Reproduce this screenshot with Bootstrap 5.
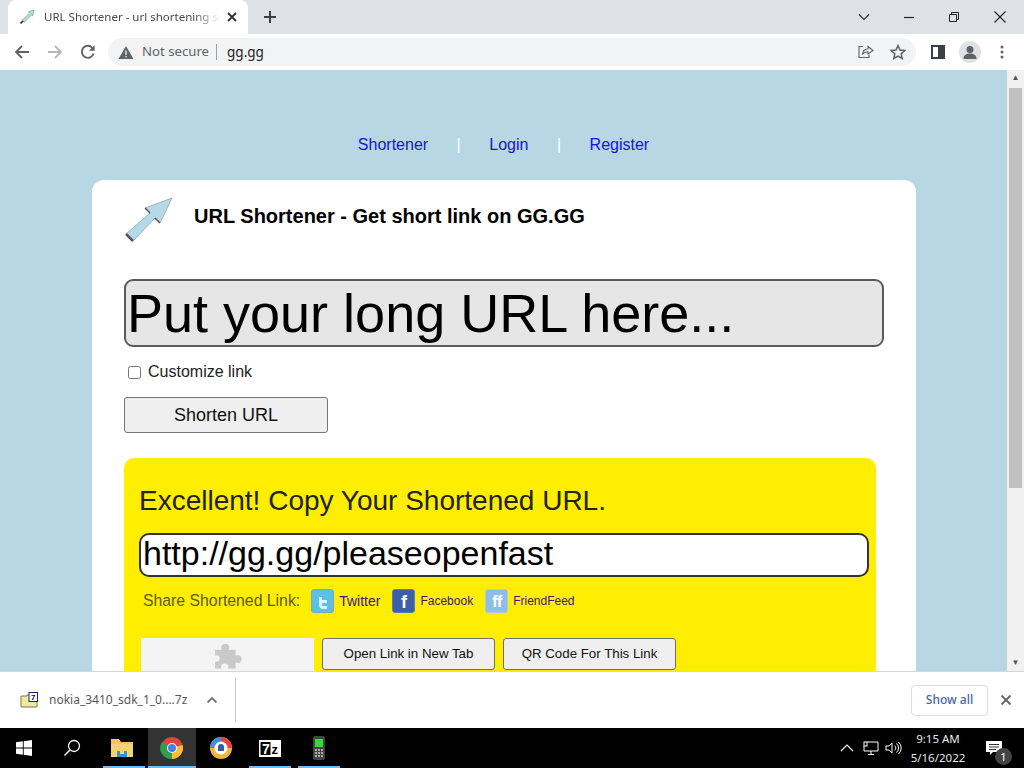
<!DOCTYPE html>
<html lang="en"><head><meta charset="utf-8"><title>URL Shortener</title>
<link href="https://cdn.jsdelivr.net/npm/bootstrap@5.3.0/dist/css/bootstrap.min.css" rel="stylesheet">
<style>
html,body{height:768px;overflow:hidden}
body{font-family:"Liberation Sans",Arial,sans-serif;background:#fff;color:#000}
.ui{font-family:"Noto Sans","Open Sans",sans-serif}
.tabstrip{height:34px;background:#dee1e6}
.tabbox{width:240px;height:34px;margin-left:8px;background:#fff;border-radius:8px 8px 0 0;padding:0 10px 0 11px;font-size:11.5px;color:#45494e;white-space:nowrap}
.tabtitle{width:176px;margin-left:1px;-webkit-mask-image:linear-gradient(90deg,#000 85%,transparent);mask-image:linear-gradient(90deg,#000 85%,transparent)}
.tabx{margin-left:6px}
.newtab{margin-left:14px}
.winbtns{margin-left:auto;gap:33px;padding-right:17px}
.toolbar{height:36px;background:#fff;padding:0 0 0 14px}
.navicons{gap:17px;width:94px}
.omni{width:808px;height:28px;background:#f1f3f4;border-radius:14px;padding:0 10px;font-size:13.2px;color:#5f6368}
.omni .sep{width:1px;height:16px;background:#9aa0a6;margin:0 10px 0 7px}
.omni .host{color:#202124;font-size:13.5px}
.rest{gap:14px;padding-left:15px}
.avatar{width:22px;height:22px;border-radius:50%;background:#dfe1e5;overflow:hidden}
.menudots{margin-left:5px}
.pagearea{flex:1 1 auto;min-height:0;overflow:hidden;background:#b8d7e4}
.pagebody{flex:1 1 auto;min-width:0;overflow:hidden}
.topnav{padding-top:63px;height:110px;font-size:16px;gap:28.5px}
.topnav a{color:#1414dc;text-decoration:none}
.topnav .bar{color:#fff}
.sheet{width:824px;margin-left:92px;background:#fff;border-radius:12px 12px 0 0;padding:0 32px;height:600px}
.brandrow{height:99px}
.brandico{margin-top:15px;width:50px;height:50px}
.brandtitle{font-size:20px;font-weight:700;margin:24px 0 0 20px;line-height:24px}
.longurl{width:760px;height:68px;border:2px solid #5b5b5f;border-radius:9px;background:#e6e6e6;font:54px/1 "Liberation Sans",Arial,sans-serif;padding:0 1px;color:#000;display:block}
.longurl::placeholder{color:#000;opacity:1}
.longurl:focus{outline:0}
.custom{margin:15px 0 15px 4px;font-size:16px;line-height:20px;color:#222}
.custom input{width:13px;height:13px;margin:0 7px 0 0;accent-color:#fff}
.shortbtn{display:block;width:204px;height:36px;font-size:18px;background:#efefef;border:1px solid #767676;border-radius:3px;color:#111;padding:0}
.resultbox{width:752px;height:300px;margin-top:25px;background:#ffee00;border-radius:10px;padding:26px 7px 0 15px}
.resulthead{font-size:28px;line-height:34px;color:#222;white-space:nowrap}
.shorturl{width:730px;height:44px;margin-top:15px;display:block;border:2px solid #333;border-radius:10px;background:#fff;font:34px/1 "Liberation Sans",Arial,sans-serif;padding:0 2px 3px;color:#000}
.sharerow{margin:10px 0 0 4px;height:28px;font-size:15.8px;color:#5c5a20}
.sharelink{font-size:14px;color:#3d1a78;text-decoration:none;margin-left:5px}
.sharelink.tiny{font-size:12px}
.sico{width:23px;height:24px;border-radius:3px;color:#fff;font-weight:700;text-align:center;line-height:24px;font-size:18px}
.sico.tw{background:#5cc0e4;border:1px solid #79aab8;margin-left:11px}
.sico.fb{background:#3b5fa8;border:1px solid #5b7cb8;margin-left:12px}
.sico.ff{background:#8dbde8;border:1px solid #a5cbe6;margin-left:12px;letter-spacing:-1px;font-size:17px}
.actionrow{margin:23px 0 0 2px;gap:8px}
.extslot{width:173px;height:33px;background:#f4f4f4}
.actbtn{height:32px;border:1px solid #6f6f6f;border-radius:3px;background:#efefef;font-size:13.3px;color:#111;padding:0;width:173px}
.scrolltrack{width:17px;background:#f1f1f1;height:100%}
.thumb{width:13px;height:400px;background:#c1c1c1;margin:2px 0 0 2px}
.arrowbox{height:16px;font-size:8px;line-height:16px;text-align:center;color:#505050}
.dlbar{height:57px;background:#fff;border-top:1px solid #d6d6d6;padding:0 12px 0 20px}
.dlname{font-size:12px;color:#55585d;margin-left:11px;width:146px}
.chevup{margin-left:11px}
.dlsep{width:1px;height:44px;background:#c8c8c8;margin-left:17px}
.showall{height:31px;width:77px;margin-left:auto;border:1px solid #dadce0;border-radius:4px;background:#fff;font-size:12px;color:#44689f;padding:0;font-weight:500}
.dlclose{margin-left:12px}
.taskbar{height:40px;background:#000;color:#fff}
.tb{width:48px;height:40px}
.tb.on{background:#333}
.tb.open{position:relative}
.tb.open::after{content:"";position:absolute;left:3px;right:3px;bottom:0;height:2px;background:#76b9ed}
.tb.on::after{left:0;right:0}
.step{margin-left:1px}
.stepfirst{margin-left:4px}
.tray{margin-left:auto;font-size:11.5px;color:#e8e8e8;line-height:19px;gap:6px}
.traychev{margin-right:3px}
.clock{text-align:center;width:60px}
.notif{width:40px;height:40px;margin-right:10px}
.notifcount{width:17px;height:17px;background:#444;color:#fff;font-size:11px;bottom:3px;right:2px}
</style></head>
<body class="d-flex flex-column">
<div class="tabstrip d-flex align-items-center ui flex-shrink-0">
  <div class="tabbox d-flex align-items-center">
    <svg width="16" height="16" viewBox="0 0 16 16" class="flex-shrink-0 me-2"><path d="M15 1 9.500 2.700 10.700 4 3 11.200 5.200 13.400 12.500 5.900 13.700 7Z" fill="#b3dcd8" stroke="#6b8f90" stroke-width=".6"/><path d="M1.500 14.500 4 12" stroke="#222" stroke-width="1.600"/></svg>
    <span class="tabtitle">URL Shortener - url shortening se</span>
    <svg class="tabx flex-shrink-0" width="12" height="12" viewBox="0 0 12 12"><path d="M2 2l8 8M10 2l-8 8" stroke="#333" stroke-width="1.800"/></svg>
  </div>
  <svg class="newtab" width="16" height="16" viewBox="0 0 16 16"><path d="M8 2v12M2 8h12" stroke="#3c4043" stroke-width="2"/></svg>
  <div class="winbtns d-flex align-items-center flex-shrink-0">
    <svg width="12" height="12" viewBox="0 0 12 12"><path d="M1 3.500 6 8.500 11 3.500" fill="none" stroke="#333" stroke-width="1.200"/></svg>
    <svg width="12" height="12" viewBox="0 0 12 12"><path d="M1 6.500h10" stroke="#222" stroke-width="1.200"/></svg>
    <svg width="12" height="12" viewBox="0 0 12 12"><path d="M1.500 3.500h7v7h-7zM3.500 3.500v-2h7v7h-2" fill="none" stroke="#222"/></svg>
    <svg width="14" height="14" viewBox="0 0 14 14"><path d="M1.500 1.500l11 11M12.500 1.500l-11 11" stroke="#222" stroke-width="1.100"/></svg>
  </div>
</div>
<div class="toolbar d-flex align-items-center ui flex-shrink-0">
  <div class="navicons d-flex align-items-center flex-shrink-0">
    <svg width="16" height="16" viewBox="0 0 16 16"><path d="M15 8H2M8 2 2 8l6 6" fill="none" stroke="#5f6368" stroke-width="1.800"/></svg>
    <svg width="16" height="16" viewBox="0 0 16 16"><path d="M1 8h13M8 2l6 6-6 6" fill="none" stroke="#b4b7bb" stroke-width="1.800"/></svg>
    <svg width="16" height="16" viewBox="0 0 16 16"><path d="M13.600 9.500A6 6 0 1 1 12.300 3.800" fill="none" stroke="#5f6368" stroke-width="1.900"/><path d="M14.600 1.200v5.600H9z" fill="#5f6368"/></svg>
  </div>
  <div class="omni d-flex align-items-center flex-shrink-0">
    <svg width="16" height="15" viewBox="0 0 16 15" class="me-2"><path d="M8 1 15.500 14H.5Z" fill="#5f6368"/><path d="M8 5.500v4.500M8 11v1.500" stroke="#f1f3f4" stroke-width="1.300"/></svg>
    <span>Not secure</span><span class="sep"></span><span class="host">gg.gg</span>
    <svg width="17" height="16" viewBox="0 0 17 16" class="ms-auto me-3"><path d="M6 2.500H2v11h10v-3" fill="none" stroke="#5f6368" stroke-width="1.100"/><path d="M5.500 10C6 6.500 8.500 5 11 5V2.500L16 6.500 11 10V7.700C8.500 7.700 7 8.500 5.500 10Z" fill="none" stroke="#5f6368" stroke-width="1.100"/></svg>
    <svg width="16" height="16" viewBox="0 0 16 16"><path d="M8 1.500 10 6l4.800.5-3.600 3.200 1 4.800L8 12l-4.200 2.500 1-4.800L1.200 6.500 6 6Z" fill="none" stroke="#5f6368" stroke-width="1.500"/></svg>
  </div>
  <div class="rest d-flex align-items-center">
    <svg width="14" height="14" viewBox="0 0 14 14"><rect x="1" y="1" width="12" height="12" fill="none" stroke="#3c4043" stroke-width="2"/><rect x="7" y="1" width="6" height="12" fill="#3c4043"/></svg>
    <span class="avatar d-block"><svg width="22" height="22" viewBox="0 0 22 22" class="d-block"><circle cx="11" cy="8.500" r="3.500" fill="#5f6368"/><path d="M4.500 18c0-4 3-5.500 6.500-5.500S17.500 14 17.500 18Z" fill="#5f6368"/></svg></span>
    <svg class="menudots" width="4" height="14" viewBox="0 0 4 14"><circle cx="2" cy="2" r="1.500" fill="#5f6368"/><circle cx="2" cy="7" r="1.500" fill="#5f6368"/><circle cx="2" cy="12" r="1.500" fill="#5f6368"/></svg>
  </div>
</div>
<main class="pagearea d-flex">
  <div class="pagebody">
    <nav class="topnav d-flex justify-content-center align-items-start">
      <a href="#">Shortener</a><span class="bar">|</span><a href="#">Login</a><span class="bar">|</span><a href="#">Register</a>
    </nav>
    <section class="sheet">
      <div class="brandrow d-flex align-items-start">
        <svg class="brandico" viewBox="0 0 50 50"><path d="M48 3 21 13 26 18 2 39 9 46 31 23 36 28Z" fill="#b6d9e8" stroke="#9fb3ba" stroke-width="1"/><path d="M2 39 9 46" stroke="#555" stroke-width="2.500"/><path d="M21 13 26 18M31 23 36 28" stroke="#555" stroke-width="1.500"/></svg>
        <div class="brandtitle">URL Shortener - Get short link on GG.GG</div>
      </div>
      <input class="longurl" type="text" placeholder="Put your long URL here..." aria-label="Long URL">
      <label class="custom d-flex align-items-center"><input type="checkbox">Customize link</label>
      <button class="shortbtn" type="button">Shorten URL</button>
      <div class="resultbox">
        <div class="resulthead">Excellent! Copy Your Shortened URL.</div>
        <input class="shorturl" type="text" value="http://gg.gg/pleaseopenfast" aria-label="Short URL">
        <div class="sharerow d-flex align-items-center">
          <span>Share Shortened Link:</span>
          <span class="sico tw"><svg width="16" height="16" viewBox="0 0 16 16"><path d="M4 2v8c0 2.500 2 4 4 4h4v-3H8c-.8 0-1-.5-1-1V8h5V5H7V2Z" fill="#dff3fa"/></svg></span><a class="sharelink" href="#">Twitter</a>
          <span class="sico fb">f</span><a class="sharelink tiny" href="#">Facebook</a>
          <span class="sico ff">ff</span><a class="sharelink tiny" href="#">FriendFeed</a>
        </div>
        <div class="actionrow d-flex">
          <div class="extslot d-flex align-items-center justify-content-center"><svg width="32" height="32" viewBox="0 0 30 30"><path d="M2 11h7c-1-1.500-1-3 0-4.500 1.500-2 6-2 7 0 .8 1.500.5 3 0 4.500h7v6c2-1 3.500-.8 5 .5 1.500 1.800 1.500 4.500 0 6-1.500 1.300-3 1.300-5 .5v6H15c1-2 .8-3.500-1-4.500-2-1-4-.8-5.500 1-.5 1-.5 2 0 3.500H2v-7c2 .5 3.500 0 4.500-1.500.8-2 0-4-1.500-4.800-1-.4-2-.2-3 .3Z" fill="#c9c9c9" transform="translate(1 0) scale(.92)"/></svg></div>
          <button class="actbtn" type="button">Open Link in New Tab</button>
          <button class="actbtn" type="button">QR Code For This Link</button>
        </div>
      </div>
    </section>
  </div>
  <div class="scrolltrack d-flex flex-column flex-shrink-0">
    <div class="arrowbox">&#9650;</div>
    <div class="thumb"></div>
    <div class="arrowbox mt-auto">&#9660;</div>
  </div>
</main>
<div class="dlbar d-flex align-items-center ui flex-shrink-0">
  <svg width="18" height="16" viewBox="0 0 18 16" class="flex-shrink-0"><path d="M1 4h6v-1h10v12H1Z" fill="#efe9a2" stroke="#7a7a50"/><rect x="9" y="0.500" width="8.500" height="9" fill="#fff" stroke="#22226a"/><text x="11" y="8" font-size="8" font-weight="700" font-family="Liberation Sans" fill="#111">7</text></svg>
  <span class="dlname">nokia_3410_sdk_1_0....7z</span>
  <svg width="12" height="8" viewBox="0 0 12 8" class="chevup flex-shrink-0"><path d="M1.500 6.500 6 2l4.500 4.500" fill="none" stroke="#777" stroke-width="1.800"/></svg>
  <span class="dlsep"></span>
  <button class="showall ui" type="button">Show all</button>
  <svg class="dlclose" width="12" height="12" viewBox="0 0 12 12"><path d="M1.500 1.500l9 9M10.500 1.500l-9 9" stroke="#666" stroke-width="1.800"/></svg>
</div>
<footer class="taskbar d-flex align-items-center ui flex-shrink-0">
  <div class="tb d-flex align-items-center justify-content-center"><svg width="16" height="16" viewBox="0 0 16 16"><path d="M0 2.300 6.800 1.300v6.300H0ZM7.700 1.200 16 0v7.600H7.700ZM0 8.400h6.800v6.300L0 13.700ZM7.700 8.400H16V16l-8.300-1.200Z" fill="#fff"/></svg></div>
  <div class="tb d-flex align-items-center justify-content-center"><svg width="18" height="18" viewBox="0 0 18 18"><circle cx="11" cy="7" r="5.500" fill="none" stroke="#fff" stroke-width="1.300"/><path d="M7 11 1.500 16.500" stroke="#fff" stroke-width="1.500"/></svg></div>
  <div class="tb open stepfirst d-flex align-items-center justify-content-center"><svg width="22" height="20" viewBox="0 0 22 20" class="me-1"><path d="M0 1h8l2 3h12v15H0Z" fill="#f0c75e"/><path d="M0 6h22v13H0Z" fill="#f5d276"/><path d="M6 13h10v6H6Z" fill="#3d8fcf"/><path d="M9 13h4v3H9Z" fill="#f5d276"/></svg></div>
  <div class="tb on open d-flex align-items-center justify-content-center"><svg width="24" height="24" viewBox="0 0 24 24"><circle cx="12" cy="12" r="11" fill="#db4437"/><path d="M12 12 22.500 9A11 11 0 0 1 12 23Z" fill="#fbc02d"/><path d="M12 12 12 23A11 11 0 0 1 2 6Z" fill="#2e9e4f"/><circle cx="12" cy="12" r="5" fill="#fff"/><circle cx="12" cy="12" r="4" fill="#4a7fe8"/></svg></div>
  <div class="tb step d-flex align-items-center justify-content-center"><svg width="24" height="24" viewBox="0 0 24 24"><circle cx="12" cy="12" r="11" fill="#f2b53a"/><path d="M12 1A11 11 0 0 1 23 12H12Z" fill="#e8443e"/><path d="M1 12A11 11 0 0 1 12 1V12Z" fill="#3a8ee6"/><circle cx="12" cy="12" r="6.500" fill="#fff"/><path d="M9 11a3 3 0 0 1 6 0v4H9Z" fill="#2f5f9e"/></svg></div>
  <div class="tb open step d-flex align-items-center justify-content-center"><svg width="22" height="17" viewBox="0 0 22 17"><rect width="22" height="17" fill="#fff"/><rect x="1.500" y="2" width="10" height="13" fill="#000"/><text x="3" y="13.500" font-size="14" font-weight="700" font-family="Liberation Sans" fill="#fff">7</text><text x="12.500" y="14" font-size="13" font-weight="700" font-family="Liberation Sans" fill="#000">z</text></svg></div>
  <div class="tb open step d-flex align-items-center justify-content-center"><svg width="12" height="24" viewBox="0 0 12 24"><rect width="12" height="24" rx="2" fill="#444"/><rect x="2" y="3" width="8" height="8" fill="#33dd33"/><path d="M2 14h8M2 17h8M2 20h8" stroke="#ccc" stroke-width="1.500" stroke-dasharray="2 1"/></svg></div>
  <div class="tray d-flex align-items-center">
    <svg class="traychev" width="14" height="8" viewBox="0 0 14 8"><path d="M1 7l6-6 6 6" fill="none" stroke="#fff" stroke-width="1.100"/></svg>
    <svg width="16" height="16" viewBox="0 0 16 16"><path d="M4 2h11v9H1V6" fill="none" stroke="#fff"/><rect x="1" y="2" width="3" height="4" fill="none" stroke="#fff"/><path d="M8 11v3M5 14.500h6" stroke="#fff"/></svg>
    <svg width="17" height="16" viewBox="0 0 17 16"><path d="M1 6h3l3-3v10l-3-3H1Z" fill="none" stroke="#fff"/><path d="M9.500 5.500a3 3 0 0 1 0 5M11.500 3.500a6 6 0 0 1 0 9M13.500 2a8 8 0 0 1 0 12" fill="none" stroke="#fff"/></svg>
    <div class="clock">9:15 AM<br>5/16/2022</div>
    <div class="notif position-relative d-flex align-items-center justify-content-center"><svg width="17" height="15" viewBox="0 0 17 15"><path d="M0 0h16v11H7l-3 3v-3H0Z" fill="#fff"/><path d="M3 3.500h10M3 6h10M3 8.500h7" stroke="#333"/></svg><span class="notifcount position-absolute rounded-circle d-flex align-items-center justify-content-center">1</span></div>
  </div>
</footer>
<script src="https://cdn.jsdelivr.net/npm/bootstrap@5.3.0/dist/js/bootstrap.bundle.min.js"></script>
</body></html>
